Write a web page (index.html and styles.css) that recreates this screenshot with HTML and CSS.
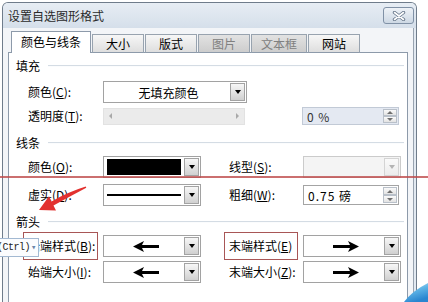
FILE: index.html
```html
<!DOCTYPE html>
<html lang="zh-CN">
    <head>
        <meta charset="UTF-8">
        <title>设置自选图形格式</title>
        <link rel="stylesheet" href="styles.css">
    </head>
    <body>
        <div class="window">
            <div class="titlebar">
                <span class="title">设置自选图形格式</span>
                <span class="close">
                    <svg width="14" height="10" viewBox="0 0 14 10"><path d="M2.5 1.5 L11.5 8.5 M11.5 1.5 L2.5 8.5" stroke="#66768a" stroke-width="3.4" stroke-linecap="round"/><path d="M2.5 1.5 L11.5 8.5 M11.5 1.5 L2.5 8.5" stroke="#fff" stroke-width="1.6" stroke-linecap="round"/></svg>
                </span>
            </div>
            <div class="client">
                <!-- 选项卡 -->
                <div class="tabs">
                    <div class="tab active">颜色与线条</div>
                    <div class="tab">大小</div>
                    <div class="tab">版式</div>
                    <div class="tab off">图片</div>
                    <div class="tab off">文本框</div>
                    <div class="tab">网站</div>
                </div>
                <div class="panel">
                    <!-- 填充 -->
                    <div class="group"><span>填充</span><i></i></div>
                    <div class="row r1">
                        <label class="lbl">颜色(<u>C</u>):</label>
                        <div class="combo long"><span class="val">无填充颜色</span><b class="drop"></b></div>
                    </div>
                    <div class="row r2">
                        <label class="lbl">透明度(<u>T</u>):</label>
                        <div class="slider"><i class="tl"></i><i class="tr"></i></div>
                        <div class="spin grey"><span class="num">0 %</span><b class="ud"><i class="up"></i><i class="dn"></i></b></div>
                    </div>
                    <!-- 线条 -->
                    <div class="group g2"><span>线条</span><i></i></div>
                    <div class="row r3">
                        <label class="lbl">颜色(<u>O</u>):</label>
                        <div class="combo"><span class="swatch"></span><b class="drop"></b></div>
                        <label class="lbl right">线型(<u>S</u>):</label>
                        <div class="combo off"><span class="val"></span><b class="drop"></b></div>
                    </div>
                    <div class="row r4">
                        <label class="lbl">虚实(<u>D</u>):</label>
                        <div class="combo"><span class="stroke"></span><b class="drop"></b></div>
                        <label class="lbl right">粗细(<u>W</u>):</label>
                        <div class="spin"><span class="num">0.75 磅</span><b class="ud"><i class="up"></i><i class="dn"></i></b></div>
                    </div>
                    <!-- 箭头 -->
                    <div class="group g3"><span>箭头</span><i></i></div>
                    <div class="row r5">
                        <label class="lbl marked">始端样式(<u>B</u>):</label>
                        <div class="combo"><span class="val"><svg width="26" height="11" viewBox="0 0 26 11"><path d="M0 5.5 L11 0 L9 4 L26 4 L26 7 L9 7 L11 11 Z" fill="#000"/></svg></span><b class="drop"></b></div>
                        <label class="lbl right marked">末端样式(<u>E</u>)</label>
                        <div class="combo"><span class="val"><svg width="26" height="11" viewBox="0 0 26 11"><path d="M26 5.5 L15 0 L17 4 L0 4 L0 7 L17 7 L15 11 Z" fill="#000"/></svg></span><b class="drop"></b></div>
                    </div>
                    <div class="row r6">
                        <label class="lbl">始端大小(<u>I</u>):</label>
                        <div class="combo"><span class="val"><svg width="26" height="11" viewBox="0 0 26 11"><path d="M0 5.5 L11 0 L9 4 L26 4 L26 7 L9 7 L11 11 Z" fill="#000"/></svg></span><b class="drop"></b></div>
                        <label class="lbl right">末端大小(<u>Z</u>):</label>
                        <div class="combo"><span class="val"><svg width="26" height="11" viewBox="0 0 26 11"><path d="M26 5.5 L15 0 L17 4 L0 4 L0 7 L17 7 L15 11 Z" fill="#000"/></svg></span><b class="drop"></b></div>
                    </div>
                </div>
            </div>
        </div>

        <!-- 标注 -->
        <div class="redline"></div>
        <svg class="pointer" width="60" height="36" viewBox="0 0 60 36"><path d="M9 30 L19 16.2 L21.5 21.4 Q38 12 55.7 6.5 L56.3 7.8 Q40 16.5 23.5 25.4 L26 30.6 Z" fill="#e2312f"/></svg>
        <div class="ctrl">(Ctrl)<span>&#9662;</span></div>
        <svg class="swoosh" width="26" height="22" viewBox="0 0 26 22">
            <defs><linearGradient id="sw" x1="0" y1="0" x2="0.4" y2="1"><stop offset="0" stop-color="#c4e8f8"/><stop offset="0.5" stop-color="#5fb4e6"/><stop offset="1" stop-color="#2a86d0"/></linearGradient></defs>
            <path d="M2 22 Q10 11 26 3 L26 22 Z" fill="url(#sw)"/>
        </svg>
    </body>
</html>
```

FILE: styles.css
```css
body{margin:0;height:302px;overflow:hidden;position:relative;background:#fff;font-family:"Noto Sans CJK SC","Liberation Sans",sans-serif;font-size:12px;color:#000;}
/* 窗口 */
.window{margin:2px 0 0 2px;width:415px;height:310px;box-sizing:border-box;border:1px solid #6f7c8b;border-bottom:none;border-radius:6px 6px 0 0;background:#e2e9f1;display:flex;flex-direction:column;}
.titlebar{height:25px;flex:none;display:flex;align-items:center;justify-content:space-between;padding:0 2px 0 5px;background:linear-gradient(#e7edf4,#d5dfea);border-radius:5px 5px 0 0;}
.title{color:#2a2a2a;line-height:16px;}
.close{width:29px;height:15px;border:1px solid #8091a6;border-radius:3px;background:linear-gradient(#eef2f7,#cdd8e4);display:flex;align-items:center;justify-content:center;}
.close svg{display:block;}
.client{flex:1;display:flex;flex-direction:column;margin-right:2px;padding:0 5px;background:#f3f5f8;border-right:1px solid #98a3b0;}
/* 选项卡 */
.tabs{height:25px;flex:none;display:flex;align-items:flex-end;gap:1px;padding-left:3px;margin-bottom:-1px;position:relative;z-index:1;}
.tab{height:19px;min-width:52px;box-sizing:border-box;padding:0 9px;text-align:center;line-height:17px;border:1px solid #98a3af;border-bottom-color:#8d9aaa;background:linear-gradient(#f7f7f7,#dedede);}
.tab.off{color:#808080;background:linear-gradient(#e2e2e2,#cdcdcd);}
.tab.active{height:22px;line-height:20px;background:#fff;border-color:#8d9aaa;border-bottom:none;}
.panel{flex:1;border:1px solid #8d9aaa;background:#fff;padding-top:5px;}
/* 分组标题 */
.group{display:flex;align-items:center;height:16px;padding-left:7px;line-height:16px;}
.group i{flex:1;margin:0 3px 0 8px;border-top:1px solid #d4dce4;border-bottom:1px solid #fbfcfd;}
.g2,.g3{margin-top:8px;}
.row{display:flex;align-items:center;height:22px;padding-left:19px;}
.r1{margin-top:7px;}
.r2{margin-top:2px;}
.r3{margin-top:5px;}
.r4{margin-top:6px;}
.r5{margin-top:5px;}
.r6{margin-top:4px;}
.lbl{width:75px;flex:none;line-height:16px;white-space:nowrap;position:relative;}
.lbl.right{width:74px;margin-left:28px;}
/* 红框 */
.marked::before{content:"";position:absolute;top:-6px;bottom:-6px;left:-5px;right:5px;border:1px solid #a85656;}
/* 下拉框 */
.combo{width:98px;height:22px;box-sizing:border-box;border:1px solid #a2a2a2;background:#fff;display:flex;align-items:center;padding:0 1px 0 3px;}
.combo.long{width:144px;}
.combo .val{flex:1;display:flex;justify-content:center;align-items:center;}
.combo.off{background:#f4f4f4;border-color:#cbcbcb;}
.drop{width:15px;height:18px;flex:none;box-sizing:border-box;border:1px solid #a3a3a3;background:linear-gradient(#f7f7f7,#d0d0d0);display:flex;align-items:center;justify-content:center;}
.drop::after{content:"";border-left:3.5px solid transparent;border-right:3.5px solid transparent;border-top:4px solid #000;}
.combo.off .drop{border-color:#d4d4d4;background:linear-gradient(#fafafa,#ececec);}
.combo.off .drop::after{border-top-color:#b4b4b4;}
.swatch{flex:1;height:16px;margin-right:3px;background:#000;}
.stroke{flex:1;height:2px;margin-right:3px;background:#000;}
/* 滑块 */
.slider{width:142px;height:17px;box-sizing:border-box;border:1px solid #e2e2e2;background:#ebebeb;display:flex;align-items:center;justify-content:space-between;padding:0 5px;}
.slider i{width:0;height:0;border-top:3px solid transparent;border-bottom:3px solid transparent;}
.slider .tl{border-right:3px solid #a9a9a9;}
.slider .tr{border-left:3px solid #a9a9a9;}
/* 数值框 */
.spin{width:96px;height:20px;box-sizing:border-box;border:1px solid #a4a4a4;background:#fff;display:flex;align-items:center;padding:0 1px 0 4px;}
.spin .num{flex:1;font-family:"Noto Sans CJK SC","Liberation Sans",sans-serif;letter-spacing:1px;}
.spin.grey{width:97px;height:18px;margin-left:57px;background:#e4e9f2;border-color:#c2cad6;color:#333;}
.ud{width:14px;height:16px;flex:none;display:flex;flex-direction:column;}
.spin.grey .ud{height:14px;}
.ud i{flex:1;box-sizing:border-box;border:1px solid #b9c0c9;background:linear-gradient(#fafafa,#e3e3e3);display:flex;align-items:center;justify-content:center;}
.ud .up::after{content:"";border-left:3px solid transparent;border-right:3px solid transparent;border-bottom:3px solid #6f6f6f;}
.ud .dn::after{content:"";border-left:3px solid transparent;border-right:3px solid transparent;border-top:3px solid #6f6f6f;}
/* 标注线和箭头 */
.redline{position:absolute;left:0;top:176px;width:428px;height:2px;background:rgba(190,75,75,0.8);}
.pointer{position:absolute;left:30px;top:180px;}
/* 粘贴选项 */
.ctrl{position:absolute;left:-7px;top:238px;height:19px;box-sizing:border-box;padding:0 2px 0 3px;border:1px solid #a3b9d2;background:#fbfcfe;font-family:"Liberation Mono",monospace;font-size:10px;line-height:17px;letter-spacing:-0.5px;color:#222;}
.ctrl span{color:#6a86aa;font-size:9px;margin-left:1px;}
.swoosh{position:absolute;right:0;bottom:0;}
```
